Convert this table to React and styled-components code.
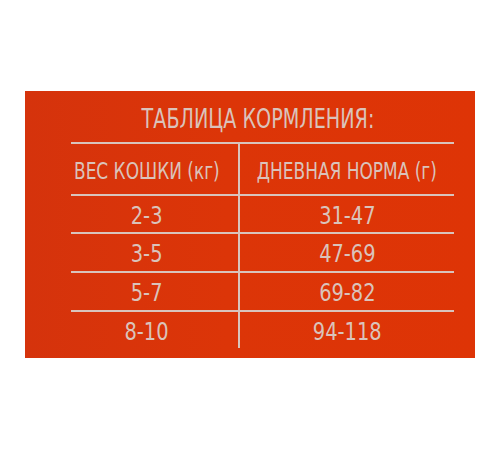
import React from "react";
import styled, { createGlobalStyle } from "styled-components";

const rows = [
  { weight: "2-3", norm: "31-47", height: 38 },
  { weight: "3-5", norm: "47-69", height: 39 },
  { weight: "5-7", norm: "69-82", height: 39 },
  { weight: "8-10", norm: "94-118", height: 38 },
];

const GlobalStyle = createGlobalStyle`
  html, body {
    margin: 0;
    padding: 0;
    background: #ffffff;
  }
`;

const App = () => {
  return (
    <Page>
      <GlobalStyle />
      <Label>
        <Title>
          <Narrow>ТАБЛИЦА КОРМЛЕНИЯ:</Narrow>
        </Title>
        <Table>
          <Cell $height={52} $left>
            <Narrow>ВЕС КОШКИ (кг)</Narrow>
          </Cell>
          <Cell $height={52}>
            <Narrow>ДНЕВНАЯ НОРМА (г)</Narrow>
          </Cell>
          {rows.map((row) => (
            <React.Fragment key={row.weight}>
              <Cell $height={row.height} $left $number>
                <Narrow $wide>{row.weight}</Narrow>
              </Cell>
              <Cell $height={row.height} $number>
                <Narrow $wide>{row.norm}</Narrow>
              </Cell>
            </React.Fragment>
          ))}
        </Table>
      </Label>
    </Page>
  );
};

export default App;

const Page = styled.div`
  width: 500px;
  height: 450px;
  box-sizing: border-box;
  padding: 91px 25px 0;
  font-family: "DejaVu Sans Condensed", "DejaVu Sans", sans-serif;
`;

const Label = styled.div`
  width: 450px;
  height: 267px;
  box-sizing: border-box;
  background: linear-gradient(90deg, #d5330c 0%, #dc3508 45%, #de3406 100%);
  padding: 0 21px 10px 46px;
  display: flex;
  flex-direction: column;
`;

const Title = styled.div`
  height: 51px;
  display: flex;
  align-items: center;
  justify-content: center;
  padding: 4px 10px 0 0;
  box-sizing: border-box;
  color: #dac3bb;
  font-size: 26px;
`;

const Narrow = styled.span`
  display: inline-block;
  transform: scaleX(${(p) => (p.$wide ? 0.9 : 0.82)});
  white-space: nowrap;
`;

const Table = styled.div`
  display: grid;
  grid-template-columns: 167px 216px;
`;

const Cell = styled.div`
  height: ${(p) => p.$height}px;
  box-sizing: border-box;
  border-top: 2px solid #d9c4bc;
  border-left: ${(p) => (p.$left ? "none" : "2px solid #d9c4bc")};
  display: flex;
  align-items: center;
  justify-content: center;
  padding: 3px ${(p) => (p.$left ? "16px" : "0")} 0 0;
  color: #dac3bb;
  font-size: ${(p) => (p.$number ? 24 : 23)}px;
  white-space: nowrap;
`;
